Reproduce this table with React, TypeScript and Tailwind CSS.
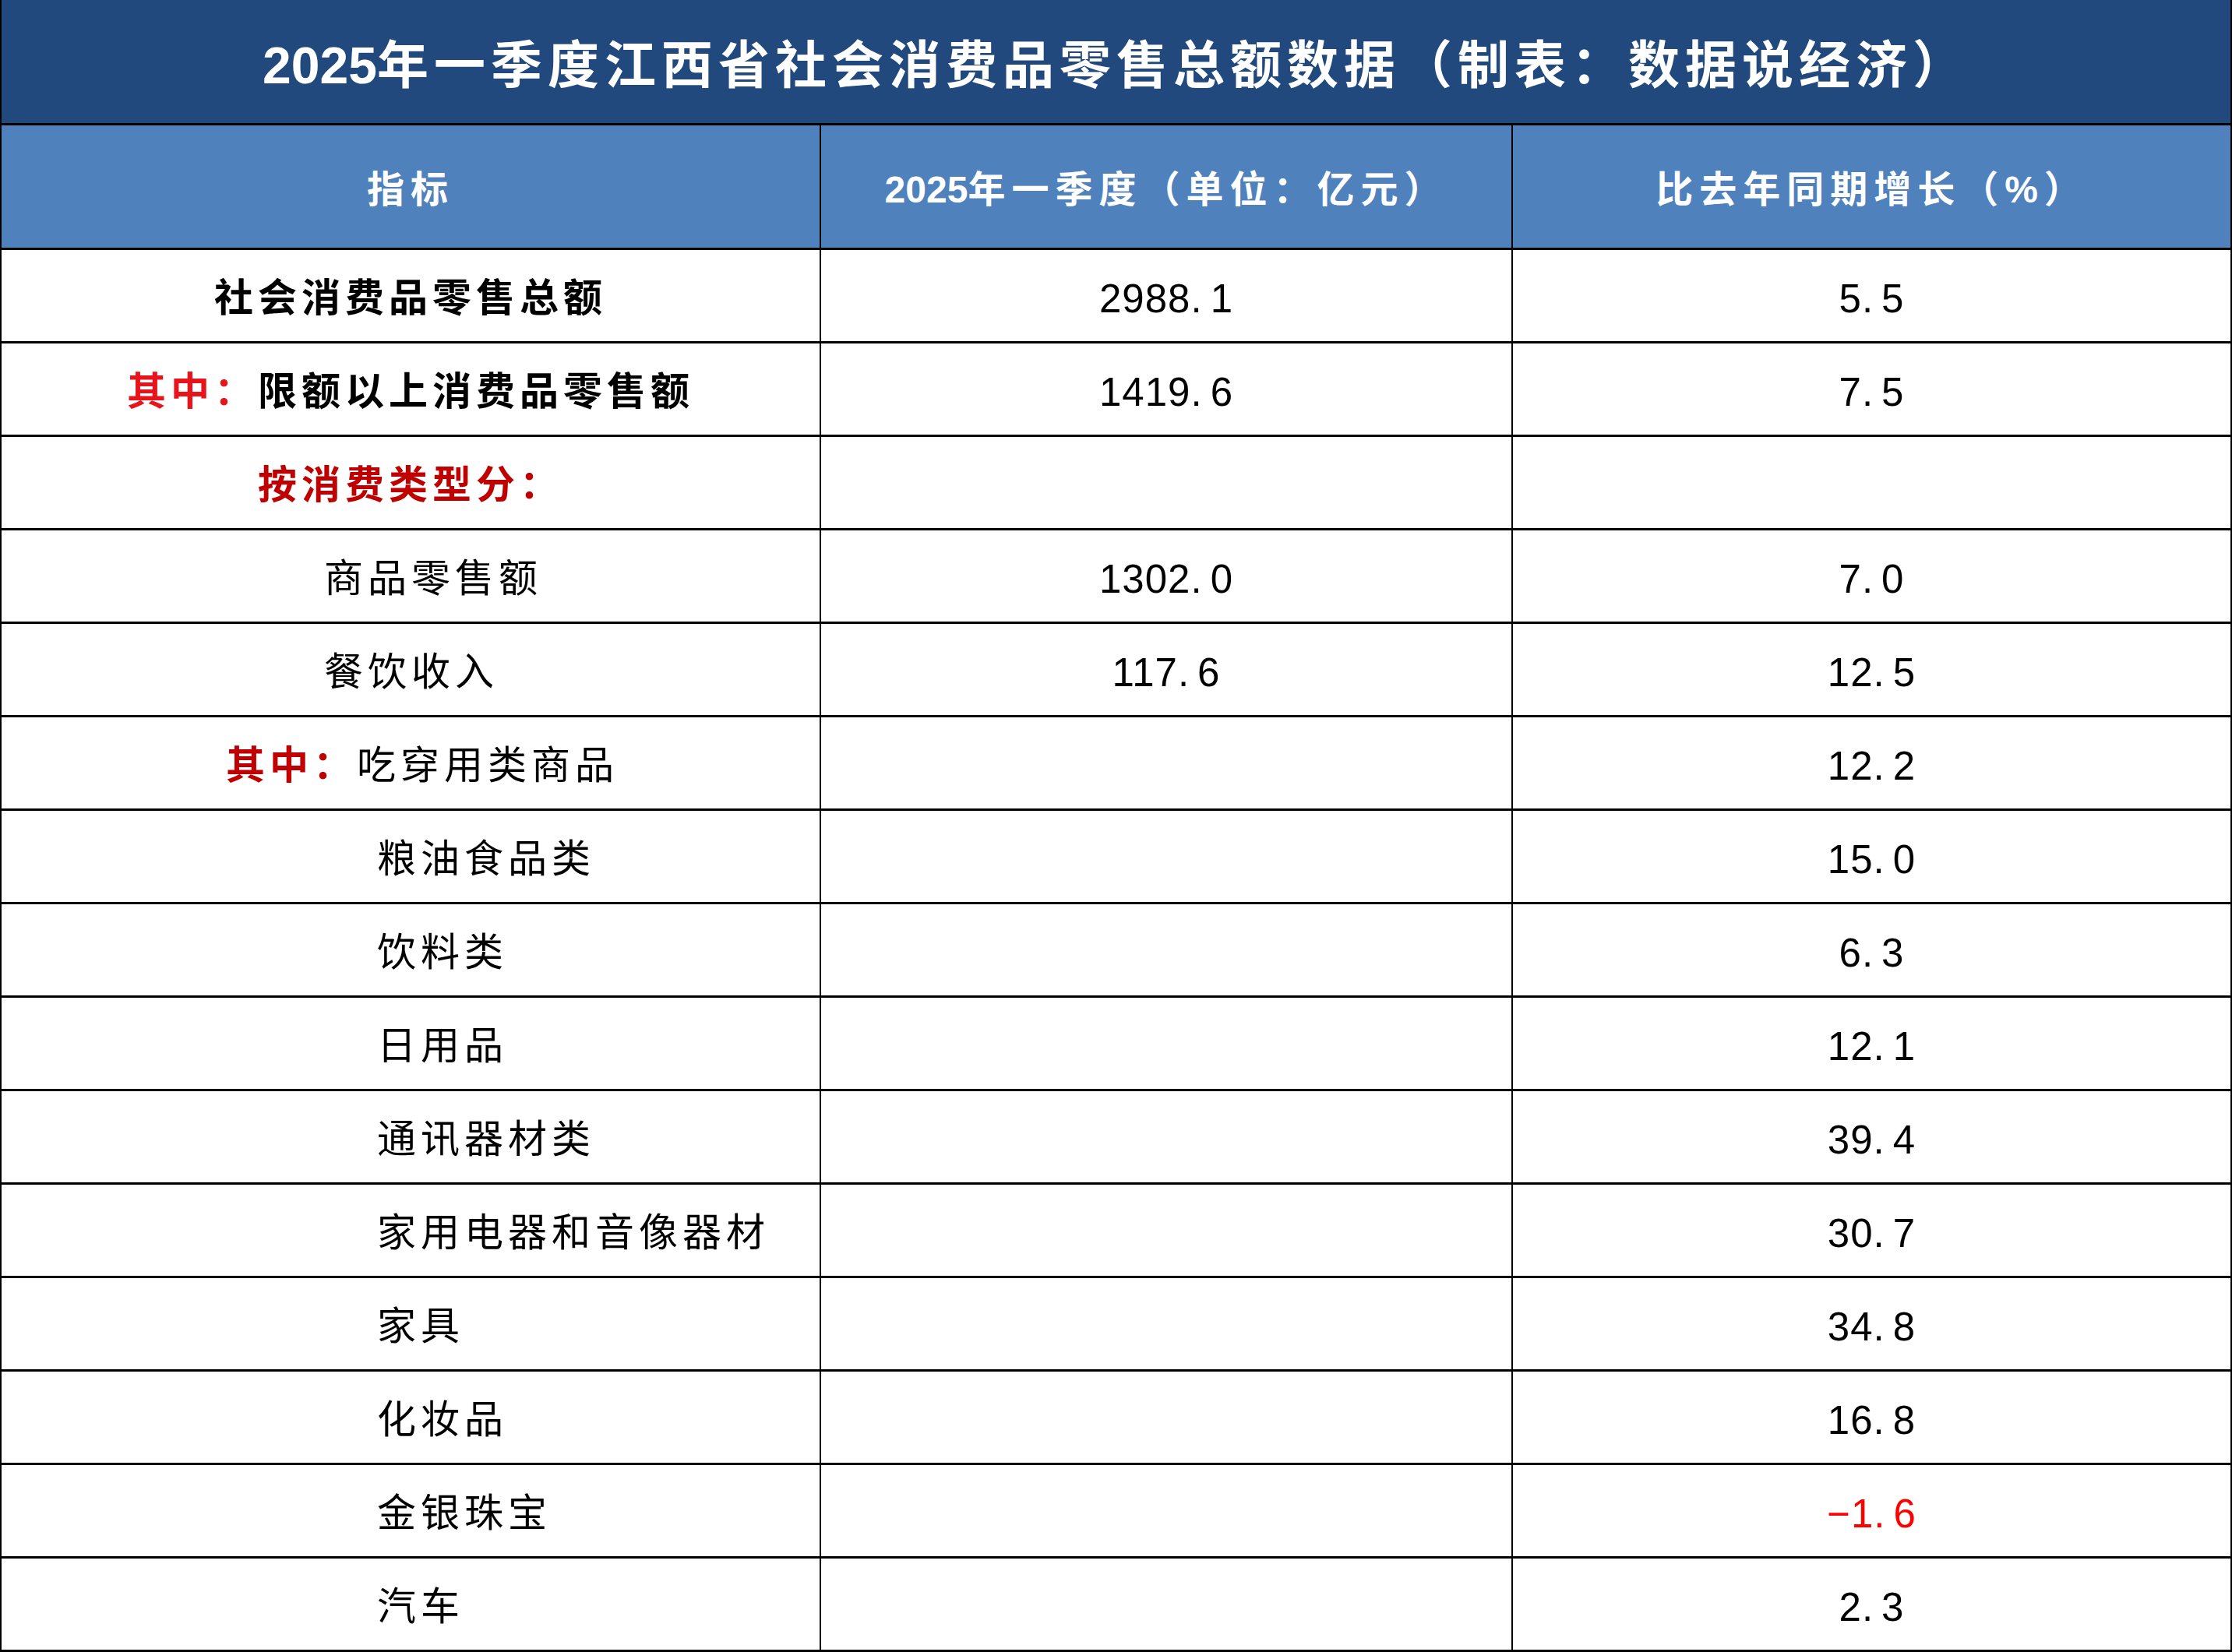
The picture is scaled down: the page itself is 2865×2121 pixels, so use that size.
import React from "react";

type Row = {
  label: React.ReactNode;
  align: "center" | "l1" | "l2" | "l3";
  v?: string;
  g?: string;
  neg?: boolean;
};

const B = ({ children }: { children: React.ReactNode }) => <span className="font-bold">{children}</span>;

const rows: Row[] = [
  { label: <B>社会消费品零售总额</B>, align: "center", v: "2988.1", g: "5.5" },
  {
    label: (
      <B>
        <span className="text-[#e8141b]">其中：</span>限额以上消费品零售额
      </B>
    ),
    align: "center",
    v: "1419.6",
    g: "7.5",
  },
  { label: <span className="font-bold text-[#c00000]">按消费类型分：</span>, align: "center" },
  { label: "商品零售额", align: "l1", v: "1302.0", g: "7.0" },
  { label: "餐饮收入", align: "l1", v: "117.6", g: "12.5" },
  {
    label: (
      <>
        <span className="font-bold text-[#c00000]">其中：</span>吃穿用类商品
      </>
    ),
    align: "l3",
    g: "12.2",
  },
  { label: "粮油食品类", align: "l2", g: "15.0" },
  { label: "饮料类", align: "l2", g: "6.3" },
  { label: "日用品", align: "l2", g: "12.1" },
  { label: "通讯器材类", align: "l2", g: "39.4" },
  { label: "家用电器和音像器材", align: "l2", g: "30.7" },
  { label: "家具", align: "l2", g: "34.8" },
  { label: "化妆品", align: "l2", g: "16.8" },
  { label: "金银珠宝", align: "l2", g: "-1.6", neg: true },
  { label: "汽车", align: "l2", g: "2.3" },
];

function Num({ t, neg }: { t?: string; neg?: boolean }) {
  if (!t) return null;
  const [a, b] = t.split(".");
  const shown = a.startsWith("-") ? "\u2212" + a.slice(1) : a;
  return (
    <span
      className={
        "font-['Liberation_Sans_Narrow','Liberation_Sans',sans-serif] text-[51px] leading-none tracking-[1px] pt-[8px] " +
        (neg ? "text-[#ff0000]" : "text-black")
      }
    >
      {shown}
      <span className="mr-[10px]">.</span>
      {b}
    </span>
  );
}

const alignClass: Record<Row["align"], string> = {
  center: "justify-center",
  l1: "justify-start pl-[414px]",
  l2: "justify-start pl-[482px]",
  l3: "justify-start pl-[288px]",
};

export default function App() {
  return (
    <div className="w-[2865px] h-[2121px] bg-white border-x-2 border-black flex flex-col font-['Liberation_Sans','Noto_Sans_CJK_SC',sans-serif] overflow-hidden">
      <div className="h-[161px] shrink-0 bg-[#21497d] border-b-[3px] border-black flex items-center justify-center text-white font-bold text-[66px] tracking-[7px] leading-none pt-[10px]">
        <span className="tracking-normal">2025</span>年一季度江西省社会消费品零售总额数据（制表：数据说经济）
      </div>
      <div className="h-[160px] shrink-0 grid grid-cols-[1050px_888px_1fr] bg-[#4f81bd] border-b-[3px] border-black text-white font-bold text-[48px] tracking-[8px] leading-none">
        <div className="flex items-center justify-center pt-[8px]">指标</div>
        <div className="flex items-center justify-center border-l-2 border-black pt-[8px]">
          <span className="tracking-normal">2025</span>年一季度（单位：亿元）
        </div>
        <div className="flex items-center justify-center border-l-2 border-black pt-[8px]">比去年同期增长（%）</div>
      </div>
      {rows.map((r, i) => (
        <div
          key={i}
          className="h-[120px] shrink-0 grid grid-cols-[1050px_888px_1fr] border-b-[3px] border-black text-black"
        >
          <div className={"flex items-center text-[50px] tracking-[6px] leading-none pt-[6px] " + alignClass[r.align]}>
            {r.label}
          </div>
          <div className="flex items-center justify-center border-l-2 border-black">
            <Num t={r.v} />
          </div>
          <div className="flex items-center justify-center border-l-2 border-black">
            <Num t={r.g} neg={r.neg} />
          </div>
        </div>
      ))}
    </div>
  );
}
